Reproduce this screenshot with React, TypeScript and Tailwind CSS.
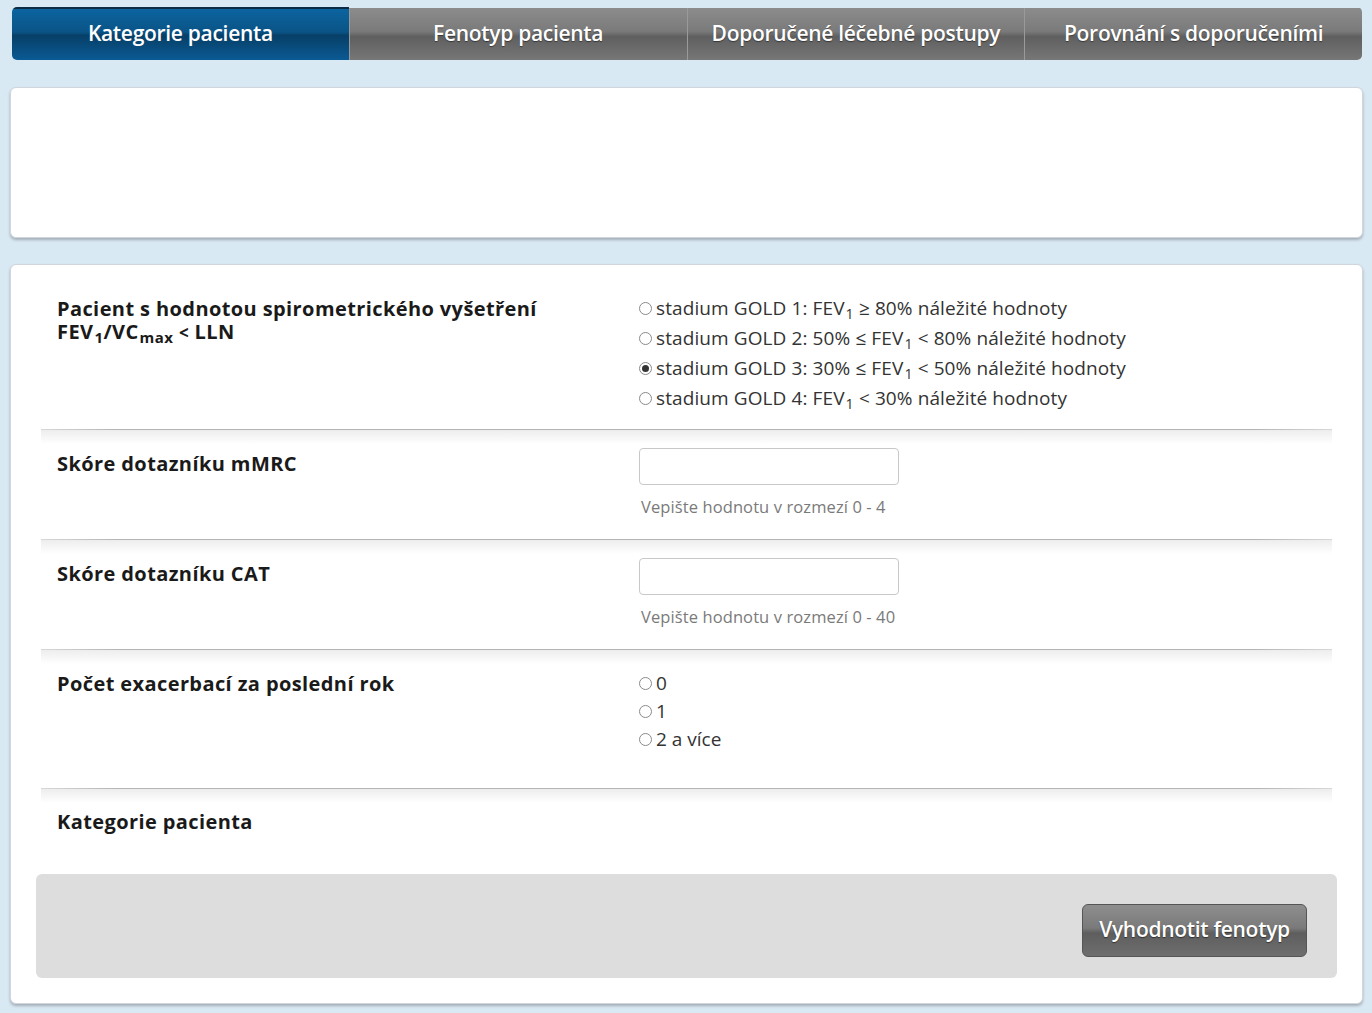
import React from "react";

const tabs = [
  "Kategorie pacienta",
  "Fenotyp pacienta",
  "Doporučené léčebné postupy",
  "Porovnání s doporučeními",
];

function Radio({ checked }: { checked?: boolean }) {
  return (
    <span className="mr-[4px] inline-flex h-[13px] w-[13px] shrink-0 items-center justify-center rounded-full border border-[#8a8a8a] bg-white">
      {checked && <span className="h-[7px] w-[7px] rounded-full bg-[#333]" />}
    </span>
  );
}

function Divider() {
  return (
    <div className="mx-[30px]">
      <div className="h-px bg-[linear-gradient(to_right,#d8d8d8,#b4b4b4_6%,#b4b4b4_94%,#d8d8d8)]" />
      <div className="h-[14px] bg-[linear-gradient(to_bottom,#ededed,#ffffff)]" />
    </div>
  );
}

function Sub({ children }: { children: React.ReactNode }) {
  return <span className="relative top-[4px] ml-px text-[0.75em] leading-none">{children}</span>;
}

function NumberField({ hint }: { hint: string }) {
  return (
    <div>
      <div className="h-[37px] w-[260px] rounded-[4px] border border-[#c8c8c8] bg-white" />
      <div className="ml-[2px] mt-[11px] text-[16.5px] leading-[22px] tracking-[0.1px] text-[#7a7a7a]">{hint}</div>
    </div>
  );
}

const labelCls = "w-[582px] text-[20px] font-bold leading-[23px] tracking-[0.4px] text-[#1a1a1a]";

export default function App() {
  return (
    <div className="min-h-[1013px] bg-[#d9e9f4] pt-[7px] font-['Open_Sans',sans-serif] text-[#222]">
      {/* tabs */}
      <div className="ml-[12px] mr-[10px] flex h-[53px] overflow-hidden rounded-[5px]">
        {tabs.map((t, i) => (
          <div
            key={t}
            className={
              i === 0
                ? "flex flex-1 items-center justify-center border-t-2 border-[#0b2c44] bg-[linear-gradient(to_bottom,#0c649f,#0a5487_45%,#073f67_52%,#0a5a94)] pb-[2px] text-[21px] font-semibold tracking-[-0.3px] text-white"
                : "mt-px flex flex-1 items-center justify-center border-l border-[#9a9a9a] bg-[linear-gradient(to_bottom,#8c8c8c,#7a7a7a_45%,#5f5f5f_55%,#777777)] pb-[1px] text-[21px] font-semibold tracking-[-0.3px] text-white [text-shadow:0_1px_1px_rgba(0,0,0,0.45)]"
            }
          >
            {t}
          </div>
        ))}
      </div>

      {/* empty card */}
      <div className="ml-[10px] mr-[9px] mt-[27px] h-[151px] rounded-[6px] border border-[#d0d6db] bg-white shadow-[0_2px_3px_rgba(0,0,0,0.25)]" />

      {/* form card */}
      <div className="ml-[10px] mr-[9px] mt-[26px] rounded-[6px] border border-[#d0d6db] bg-white pb-[25px] pt-[28px] shadow-[0_2px_3px_rgba(0,0,0,0.25)]">
        {/* row 1 */}
        <div className="flex px-[46px] pb-[16px]">
          <div className={`${labelCls} pt-[4px]`}>
            Pacient s hodnotou spirometrického vyšetření
            <br />
            FEV<Sub>1</Sub>/VC<Sub>max</Sub> <span className="text-[17px]">&lt;</span> LLN
          </div>
          <div className="text-[19px] leading-[30px] tracking-[0.1px] text-[#333]">
            <div className="flex items-center">
              <Radio />
              <span>stadium GOLD 1: FEV<Sub>1</Sub>&nbsp;≥ 80% náležité hodnoty</span>
            </div>
            <div className="flex items-center">
              <Radio />
              <span>stadium GOLD 2: 50% ≤ FEV<Sub>1</Sub>&nbsp;&lt; 80% náležité hodnoty</span>
            </div>
            <div className="flex items-center">
              <Radio checked />
              <span>stadium GOLD 3: 30% ≤ FEV<Sub>1</Sub>&nbsp;&lt; 50% náležité hodnoty</span>
            </div>
            <div className="flex items-center">
              <Radio />
              <span>stadium GOLD 4: FEV<Sub>1</Sub>&nbsp;&lt; 30% náležité hodnoty</span>
            </div>
          </div>
        </div>
        <Divider />

        {/* row 2 */}
        <div className="-mt-[14px] flex px-[46px] pb-[21px] pt-[18px]">
          <div className={`${labelCls} pt-[4px]`}>Skóre dotazníku mMRC</div>
          <NumberField hint="Vepište hodnotu v rozmezí 0 - 4" />
        </div>
        <Divider />

        {/* row 3 */}
        <div className="-mt-[14px] flex px-[46px] pb-[21px] pt-[18px]">
          <div className={`${labelCls} pt-[4px]`}>Skóre dotazníku CAT</div>
          <NumberField hint="Vepište hodnotu v rozmezí 0 - 40" />
        </div>
        <Divider />

        {/* row 4 */}
        <div className="-mt-[14px] flex px-[46px] pb-[35px] pt-[19px]">
          <div className={`${labelCls} pt-[3px]`}>Počet exacerbací za poslední rok</div>
          <div className="text-[19px] leading-[28px] text-[#333]">
            <div className="flex items-center">
              <Radio />0
            </div>
            <div className="flex items-center">
              <Radio />1
            </div>
            <div className="flex items-center">
              <Radio />2 a více
            </div>
          </div>
        </div>
        <Divider />

        {/* row 5 */}
        <div className={`-mt-[14px] px-[46px] pb-[41px] pt-[21px] ${labelCls}`}>Kategorie pacienta</div>

        <div className="mx-[25px] flex h-[104px] items-start justify-end rounded-[6px] bg-[#dddddd] pr-[30px] pt-[30px]">
          <button className="h-[53px] w-[225px] rounded-[6px] border border-[#555] bg-[linear-gradient(to_bottom,#8e8e8e,#7a7a7a_45%,#5e5e5e_55%,#6e6e6e)] pb-[2px] text-[21px] font-semibold tracking-[-0.3px] text-white [text-shadow:0_1px_1px_rgba(0,0,0,0.5)]">
            Vyhodnotit fenotyp
          </button>
        </div>
      </div>
    </div>
  );
}
